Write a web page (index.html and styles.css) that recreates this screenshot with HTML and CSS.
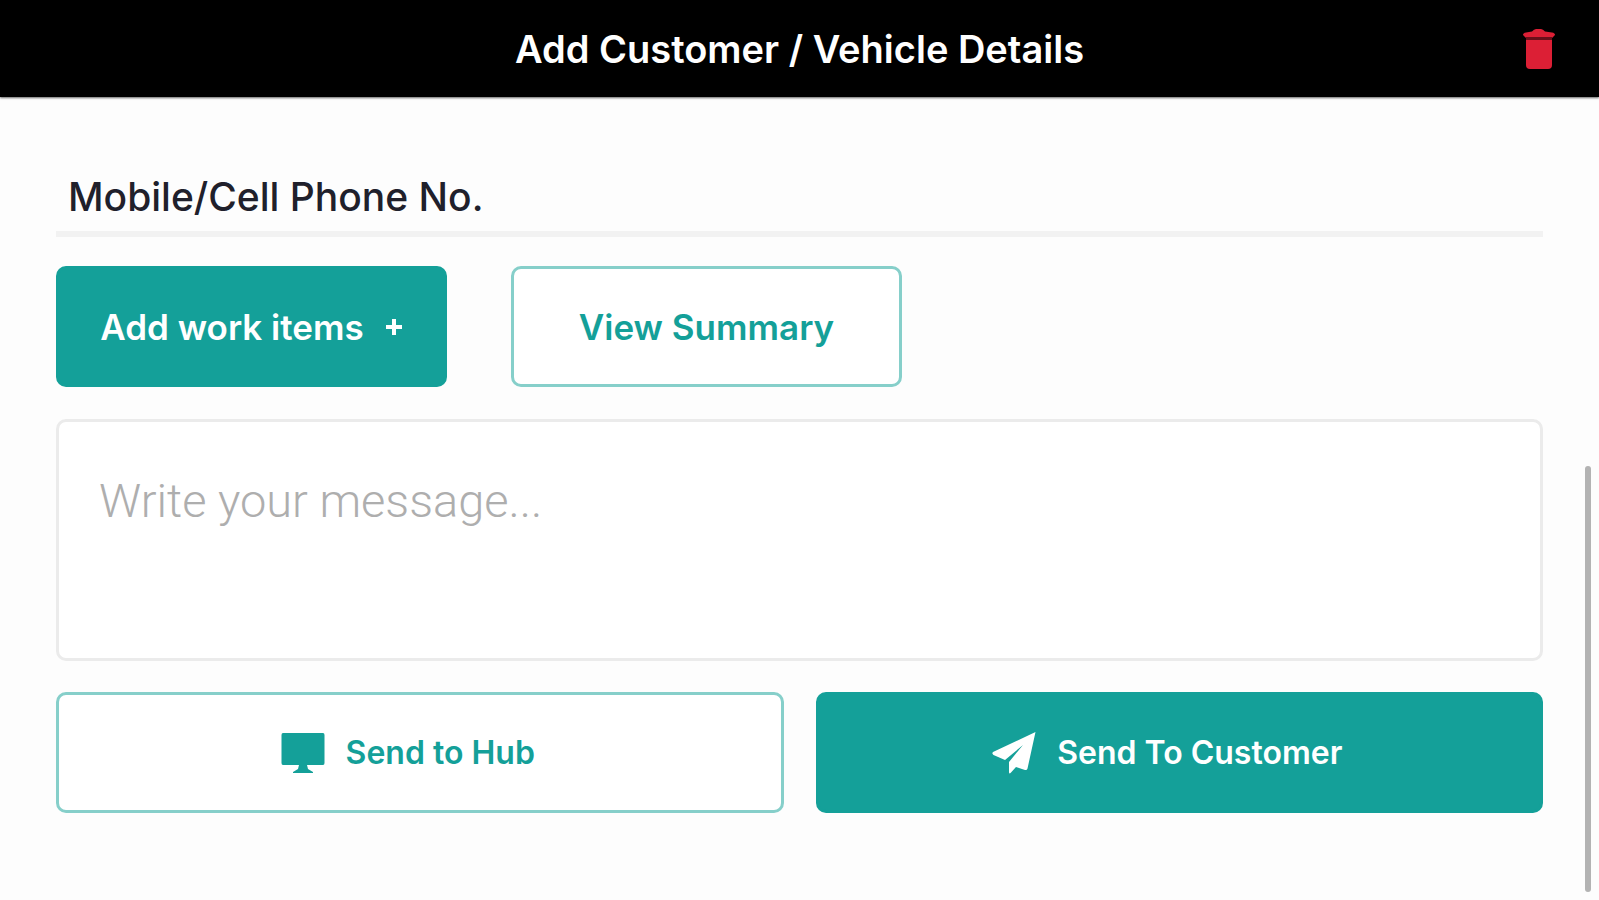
FILE: index.html
```html
<!DOCTYPE html>
<html lang="en">
<head>
    <meta charset="UTF-8">
    <meta name="viewport" content="width=device-width, initial-scale=1.0">
    <title>Add Customer / Vehicle Details</title>
    <link rel="stylesheet" href="styles.css">
</head>
<body>
    <header class="top-bar">
        <h1 class="top-title">Add Customer / Vehicle Details</h1>
        <button type="button" class="delete-button" aria-label="Delete">
            <svg class="delete-icon" viewBox="0 0 32 40" aria-hidden="true">
                <path d="M0 6Q0 4 3 3.500L9 2.500Q11 0 13 0H18Q20 0 22 2.500L29 3.500Q32 4 32 6L29 9H3Z"/>
                <path class="delete-icon-gap" d="M3 8H29V12H3Z"/>
                <path d="M3 11H29V36Q29 40 25 40H7Q3 40 3 36Z"/>
            </svg>
        </button>
    </header>

    <form class="details-form">
        <input type="tel" class="phone-input" placeholder="Mobile/Cell Phone No." aria-label="Mobile/Cell Phone No.">

        <div class="work-row">
            <button type="button" class="button button-filled">
                <span>Add work items</span>
                <svg class="plus-icon" viewBox="0 0 18 18" aria-hidden="true">
                    <path d="M9 1V17M1 9H17"/>
                </svg>
            </button>
            <button type="button" class="button button-outline">View Summary</button>
        </div>

        <textarea class="message-input" placeholder="Write your message..." aria-label="Message"></textarea>

        <div class="send-row">
            <button type="button" class="button button-outline">
                <svg class="send-icon" viewBox="0 0 44 42" aria-hidden="true">
                    <path d="M2 1H42Q43.500 1 43.500 3V31Q43.500 33 42 33H26L27 37L32 40V41H12V40L17 37L18 33H2Q.5 33 .5 31V3Q.5 1 2 1Z"/>
                </svg>
                <span>Send to Hub</span>
            </button>
            <button type="submit" class="button button-filled">
                <svg class="send-icon" viewBox="0 0 44 42" aria-hidden="true">
                    <path d="M43.500 0L1 20Q-.5 21.500 1.500 23L13 28L31 13L17 30V40Q17 42.500 19 40.500L24 35L33 38Q35 38.500 35.500 36.500Z"/>
                </svg>
                <span>Send To Customer</span>
            </button>
        </div>
    </form>

    <div class="scroll-thumb"></div>
</body>
</html>
```

FILE: styles.css
```css
* {
    margin: 0;
    padding: 0;
    box-sizing: border-box;
}

body {
    font-family: Inter, sans-serif;
    background: #fdfdfd;
    color: #20202b;
    min-height: 100vh;
    position: relative;
}

button,
input,
textarea {
    font-family: inherit;
    color: inherit;
}

/* Header */
.top-bar {
    display: grid;
    grid-template-columns: 1fr auto 1fr;
    align-items: center;
    height: 97px;
    padding: 0 44px;
    background: #000;
    box-shadow: 0 1px 2px rgba(0, 0, 0, 0.6);
}

.top-title {
    grid-column: 2;
    color: #fff;
    font-size: 38px;
    font-weight: 600;
    line-height: 48px;
}

.delete-button {
    justify-self: end;
    display: flex;
    background: none;
    border: none;
    cursor: pointer;
}

.delete-icon {
    width: 32px;
    height: 40px;
    fill: #dc1f35;
}

.delete-icon-gap {
    fill: #6b0f1a;
}

/* Form */
.details-form {
    display: flex;
    flex-direction: column;
    padding: 64px 56px;
}

.phone-input {
    width: 100%;
    height: 76px;
    padding: 0 12px;
    margin-bottom: 29px;
    background: none;
    border: none;
    border-bottom: 6px solid #f2f2f2;
    font-size: 39px;
    font-weight: 500;
    outline: none;
}

.phone-input::placeholder {
    color: #20202b;
}

.work-row {
    display: flex;
    gap: 64px;
    margin-bottom: 32px;
}

.work-row .button {
    flex: 0 1 391px;
    font-size: 35px;
}

.button {
    display: flex;
    justify-content: center;
    align-items: center;
    gap: 21px;
    height: 121px;
    border: 3px solid #86cfca;
    border-radius: 10px;
    font-size: 32px;
    font-weight: 600;
    cursor: pointer;
}

.button-filled {
    background: #14a099;
    border-color: #14a099;
    color: #fff;
}

.button-outline {
    background: #fff;
    color: #14a099;
}

.plus-icon {
    width: 18px;
    height: 18px;
    fill: none;
    stroke: currentColor;
    stroke-width: 4;
}

.message-input {
    display: block;
    width: 100%;
    height: 242px;
    padding: 49px 40px;
    margin-bottom: 31px;
    background: #fff;
    border: 3px solid #ebebeb;
    border-radius: 10px;
    font-family: Roboto, sans-serif;
    font-size: 47px;
    font-weight: 300;
    line-height: 60px;
    resize: none;
    outline: none;
}

.message-input::placeholder {
    color: #aeaeae;
}

.send-row {
    display: flex;
    gap: 32px;
}

.send-row .button {
    flex: 1;
    padding-right: 24px;
}

.send-icon {
    width: 44px;
    height: 42px;
    fill: currentColor;
}

/* Scroll indicator over the right edge */
.scroll-thumb {
    position: absolute;
    right: 8px;
    bottom: 8px;
    width: 6px;
    height: 426px;
    background: #b3b3b3;
    border-radius: 3px;
}
```
